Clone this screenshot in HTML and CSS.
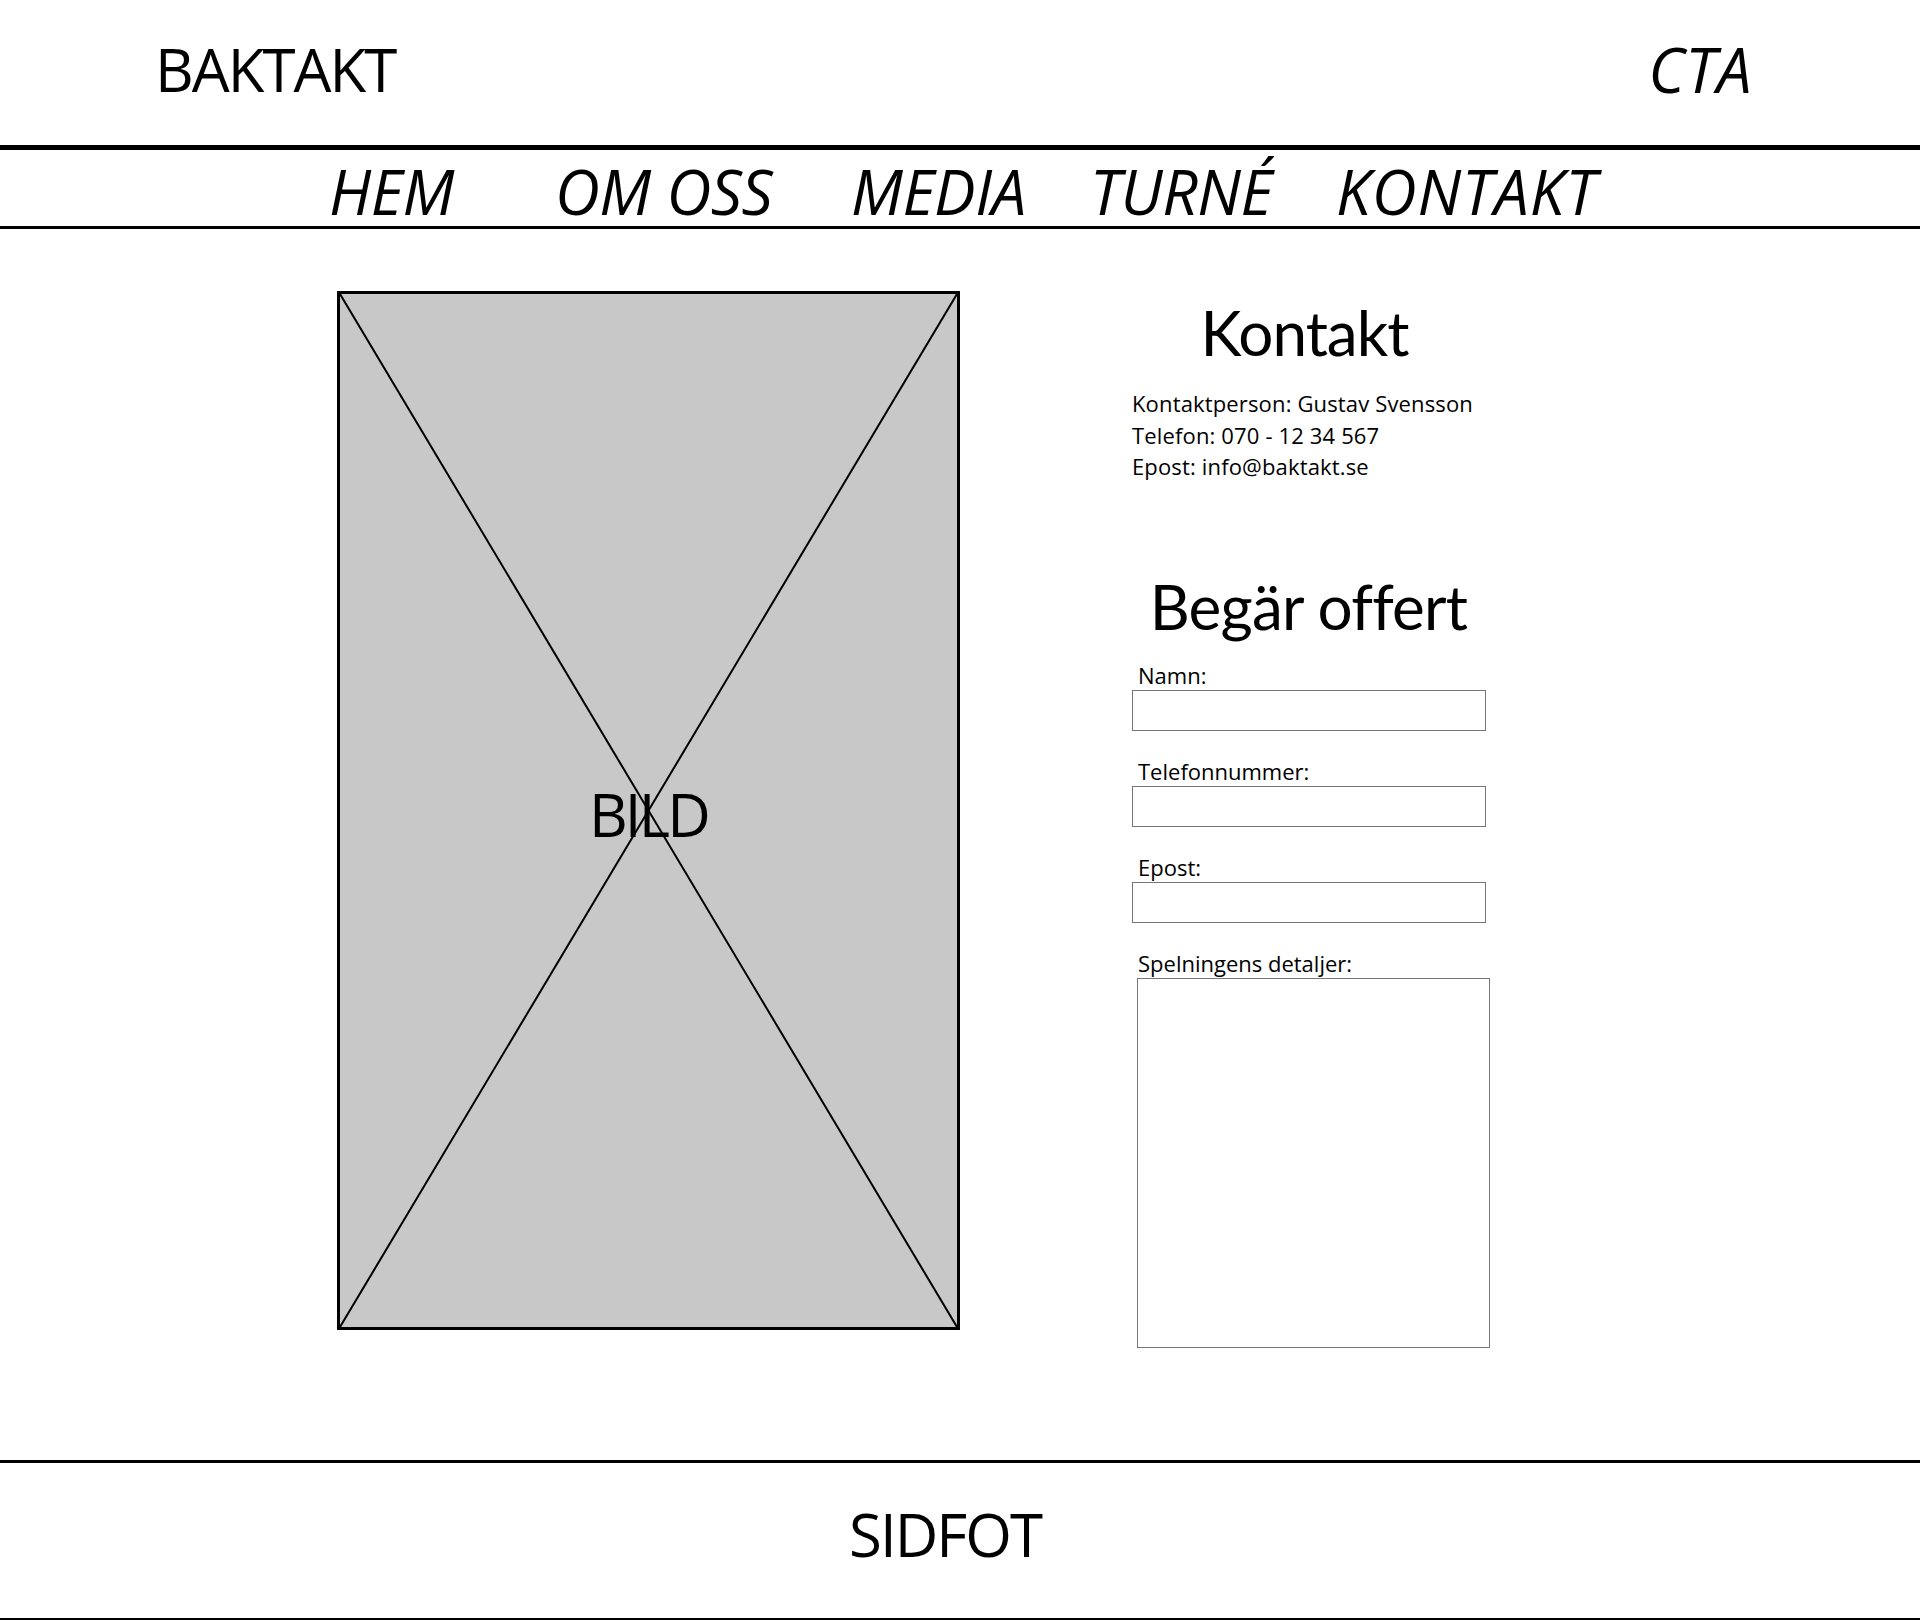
FILE: index.html
```html
<!DOCTYPE html>
<html lang="sv">
<head>
<meta charset="utf-8">
<title>Baktakt – Kontakt</title>
<link rel="stylesheet" href="styles.css">
</head>
<body>
<header class="site-header">
  <div class="logo">BAKTAKT</div>
  <div class="cta">CTA</div>
</header>
<nav class="main-nav">
  <a class="nav-item" href="#">HEM</a>
  <a class="nav-item" href="#">OM OSS</a>
  <a class="nav-item" href="#">MEDIA</a>
  <a class="nav-item" href="#">TURNÉ</a>
  <a class="nav-item nav-wide" href="#">KONTAKT</a>
</nav>
<main class="content">
  <div class="picture">
    <svg class="picture-x" viewBox="0 0 100 100" preserveAspectRatio="none">
      <line x1="0" y1="0" x2="100" y2="100" vector-effect="non-scaling-stroke"/>
      <line x1="100" y1="0" x2="0" y2="100" vector-effect="non-scaling-stroke"/>
    </svg>
    <span class="picture-label">BILD</span>
  </div>
  <section class="side">
    <h2 class="side-title contact-title">Kontakt</h2>
    <p class="contact-info">Kontaktperson: Gustav Svensson<br>Telefon: 070 - 12 34 567<br>Epost: info@baktakt.se</p>
    <h2 class="side-title offer-title">Begär offert</h2>
    <form class="offer-form">
      <div class="field">
        <label class="field-label" for="namn">Namn:</label>
        <input class="field-input" id="namn" type="text">
      </div>
      <div class="field">
        <label class="field-label" for="tel">Telefonnummer:</label>
        <input class="field-input" id="tel" type="text">
      </div>
      <div class="field">
        <label class="field-label" for="epost">Epost:</label>
        <input class="field-input" id="epost" type="text">
      </div>
      <div class="field">
        <label class="field-label" for="detaljer">Spelningens detaljer:</label>
        <textarea class="field-area" id="detaljer"></textarea>
      </div>
    </form>
  </section>
</main>
<footer class="site-footer">
  <div class="footer-text">SIDFOT</div>
</footer>
</body>
</html>
```
FILE: styles.css
```css
* { box-sizing: border-box; }

body {
  margin: 0;
  font-family: "Open Sans", "Noto Sans", sans-serif;
  color: #000;
  background: #fff;
}

.site-header {
  height: 150px;
  padding: 38px 168px 0 155px;
  display: flex;
  justify-content: space-between;
  align-items: flex-start;
  border-bottom: 5px solid #000;
}

.logo {
  font-size: 60px;
  line-height: 62px;
  letter-spacing: -2px;
}

.cta {
  font-size: 62px;
  line-height: 62px;
  font-style: italic;
  letter-spacing: 0.5px;
}

.main-nav {
  height: 79px;
  padding: 10px 0 0 329px;
  display: grid;
  grid-template-columns: 226px 296px 239px 246px auto;
  align-items: start;
  border-bottom: 3px solid #000;
}

.nav-item {
  font-size: 62px;
  line-height: 62px;
  font-style: italic;
  color: #000;
  text-decoration: none;
  white-space: nowrap;
  letter-spacing: -0.4px;
}

.nav-wide { letter-spacing: 1px; }

.content {
  height: 1231px;
  padding: 62px 0 0 337px;
  display: flex;
  align-items: flex-start;
  gap: 172px;
}

.picture {
  position: relative;
  width: 623px;
  height: 1039px;
  border: 3px solid #000;
  background: #c8c8c8;
  display: flex;
  align-items: center;
  justify-content: center;
  padding-top: 6px;
}

.picture-x {
  position: absolute;
  inset: 0;
  width: 100%;
  height: 100%;
}

.picture-x line {
  stroke: #000;
  stroke-width: 2;
}

.picture-label {
  position: relative;
  font-size: 60px;
  line-height: 62px;
  letter-spacing: -2.8px;
}

.side {
  width: 360px;
  padding-top: 10px;
}

.side-title {
  margin: 0;
  width: 353px;
  font-family: Lato, "Open Sans", sans-serif;
  font-weight: 400;
  font-size: 62px;
  line-height: 62px;
  text-align: center;
}

.contact-title { padding-right: 8px; letter-spacing: -1px; }

.contact-info {
  margin: 25px 0 0 0;
  font-size: 22px;
  line-height: 31.5px;
  letter-spacing: 0.15px;
}

.offer-title { margin-top: 92px; letter-spacing: -0.8px; }

.offer-form {
  margin-top: 26px;
  display: flex;
  flex-direction: column;
  gap: 28px;
}

.field {
  display: flex;
  flex-direction: column;
  gap: 3px;
}

.field-label {
  display: block;
  padding-left: 6px;
  font-size: 22px;
  line-height: 24px;
}

.field-input {
  display: block;
  width: 354px;
  height: 41px;
  margin: 0;
  border: 1px solid #767676;
  border-radius: 0;
  background: #fff;
  font: inherit;
}

.field-area {
  display: block;
  width: 353px;
  height: 370px;
  margin: 0 0 0 5px;
  border: 1px solid #767676;
  border-radius: 0;
  background: #fff;
  resize: none;
  font: inherit;
}

.site-footer {
  height: 160px;
  padding: 40px 30px 0 0;
  border-top: 3px solid #000;
  border-bottom: 2px solid #000;
  text-align: center;
}

.footer-text {
  font-size: 60px;
  line-height: 62px;
  letter-spacing: -2px;
}
```
